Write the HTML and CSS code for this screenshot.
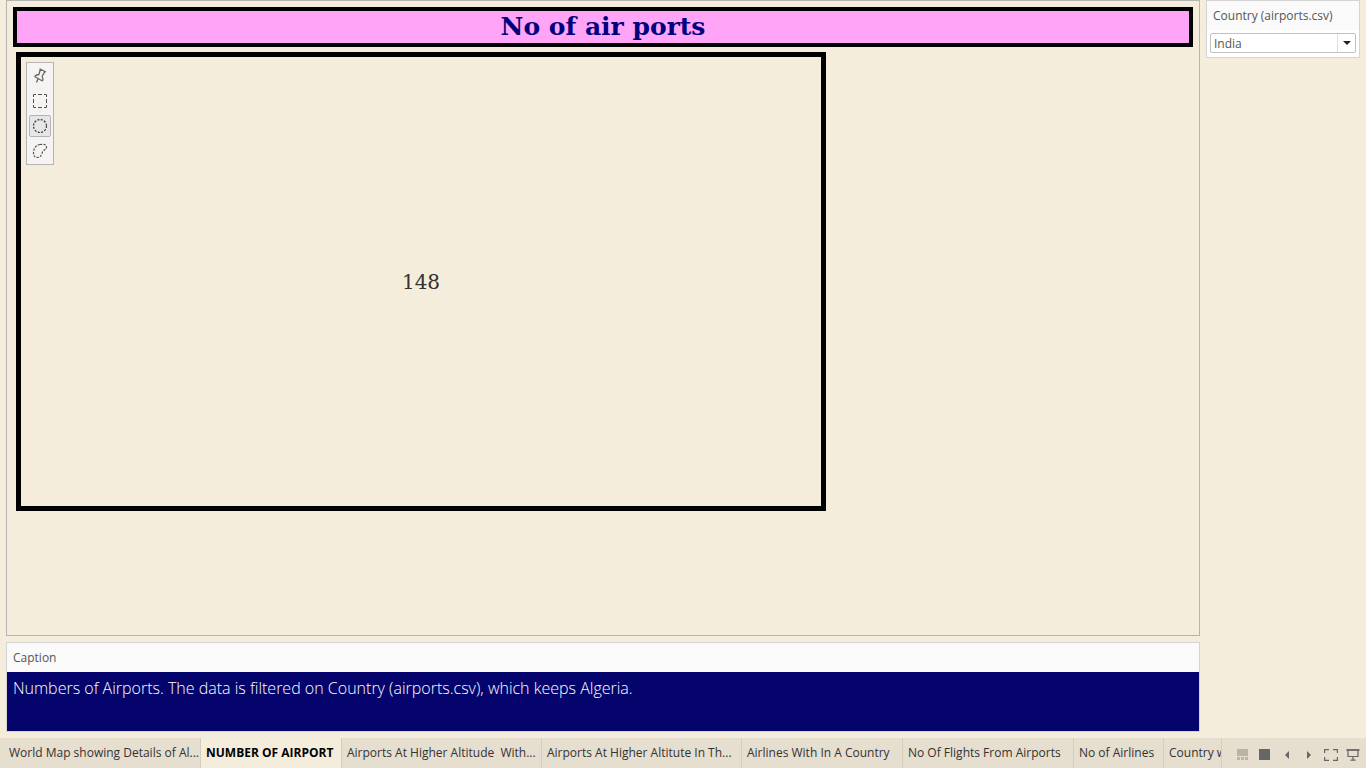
FILE: index.html
```html
<!DOCTYPE html>
<html lang="en">
<head>
<meta charset="utf-8">
<title>No of air ports</title>
<meta name="viewport" content="width=device-width, initial-scale=1">
<link rel="stylesheet" href="styles.css">
</head>
<body>
<div class="app">
  <div class="workspace">
    <main class="main">
      <section class="sheet">
        <h1 class="sheet-title">No of air ports</h1>
        <div class="canvas">
          <div class="frame">
            <output class="mark">148</output>
            <div class="tools" role="toolbar" aria-label="Selection tools">
              <button class="tool" type="button" aria-label="Pin">
                <svg width="16" height="16" viewBox="0 0 16 16" fill="none" stroke="#666" stroke-width="1.300"><path d="M7.500 0.800L14 4M8.300 1.300L7 6.500M12.800 3.600L10 8.500M2.500 8.500C4 7 5.500 6.500 7 6.500M10 8.500C11 10 11.200 11.500 10.500 13M2.500 8.500L10.500 13M6 10.700L4.500 14.500"/></svg>
              </button>
              <button class="tool" type="button" aria-label="Rectangular selection">
                <svg width="16" height="16" viewBox="0 0 16 16" fill="none" stroke="#555"><path d="M1.500 4V1.500H4M6 1.500H10M12 1.500H14.500V4M14.500 6V10M14.500 12V14.500H12M10 14.500H6M4 14.500H1.500V12M1.500 10V6"/></svg>
              </button>
              <button class="tool tool-active" type="button" aria-label="Radial selection" aria-pressed="true">
                <svg width="16" height="16" viewBox="0 0 16 16" fill="none" stroke="#333" stroke-width="1.200" stroke-dasharray="2 1.400"><circle cx="8" cy="8" r="6.500"/></svg>
              </button>
              <button class="tool" type="button" aria-label="Lasso selection">
                <svg width="16" height="16" viewBox="0 0 16 16" fill="none" stroke="#555" stroke-width="1.200" stroke-dasharray="2.200 1.300"><path d="M8 1.500C11 1.200 14.500 1.200 14.500 4C14.500 7 11.500 6.500 10.500 9C9.500 12 8.500 14.500 5.500 14.500C2.500 14.500 1.500 12.500 1.500 9.500C1.500 5.500 4 2 8 1.500Z"/></svg>
              </button>
            </div>
          </div>
        </div>
      </section>
      <section class="caption">
        <h2 class="caption-title">Caption</h2>
        <p class="caption-text">Numbers of Airports. The data is filtered on Country (airports.csv), which keeps Algeria.</p>
      </section>
    </main>
    <aside class="side">
      <div class="filter">
        <label class="filter-title" for="country">Country (airports.csv)</label>
        <div class="filter-field">
          <select class="filter-select" id="country"><option>India</option></select>
          <span class="filter-arrow"><svg width="8" height="4" viewBox="0 0 8 4"><path d="M0 0H8L4 4Z" fill="#222"/></svg></span>
        </div>
      </div>
    </aside>
  </div>
  <footer class="bar">
    <nav class="tabs" aria-label="Sheets">
      <a class="tab" href="#map">World Map showing Details of Al...</a>
      <a class="tab tab-current" href="#number" aria-current="page">NUMBER OF AIRPORT</a>
      <a class="tab" href="#altitude">Airports At Higher Altitude&nbsp; With...</a>
      <a class="tab" href="#altitute">Airports At Higher Altitute In Th...</a>
      <a class="tab" href="#country-airlines">Airlines With In A Country</a>
      <a class="tab" href="#flights">No Of Flights From Airports</a>
      <a class="tab" href="#airlines">No of Airlines</a>
      <a class="tab" href="#country-with">Country w</a>
    </nav>
    <div class="controls">
      <button class="control" type="button" aria-label="Show filmstrip"><svg width="12" height="12" viewBox="0 0 12 12" fill="#b9b3a8"><path d="M0 0H11V7H0ZM0 8H3V11H0ZM4 8H7V11H4ZM8 8H11V11H8Z"/></svg></button>
      <button class="control" type="button" aria-label="Show tabs"><svg width="12" height="12" viewBox="0 0 12 12" fill="#666"><path d="M0 0H11V11H0Z"/></svg></button>
      <button class="control" type="button" aria-label="Previous"><svg width="12" height="12" viewBox="0 0 12 12" fill="#666"><path d="M8 2V10L4 6Z"/></svg></button>
      <button class="control" type="button" aria-label="Next"><svg width="12" height="12" viewBox="0 0 12 12" fill="#666"><path d="M4 2V10L8 6Z"/></svg></button>
      <button class="control" type="button" aria-label="Full screen"><svg width="14" height="12" viewBox="0 0 14 12" fill="none" stroke="#666" stroke-width="1.200"><path d="M0.600 4V0.600H5M9 0.600H13.400V4M13.400 8V11.400H9M5 11.400H0.600V8"/></svg></button>
      <button class="control" type="button" aria-label="Presentation mode"><svg width="14" height="12" viewBox="0 0 14 12" fill="none" stroke="#666" stroke-width="1.200"><path d="M0.500 1H13.500" stroke-width="1.800"/><path d="M2 1V7.500H12V1M7 7.500V11M4.500 11.200H9.500"/></svg></button>
    </div>
  </footer>
</div>
</body>
</html>
```
FILE: styles.css
```css
* {
  box-sizing: border-box;
}

body {
  margin: 0;
  background: #f5eddc;
  color: #333;
  font-family: "Open Sans", "Noto Sans", sans-serif;
  font-size: 12px;
}

button {
  padding: 0;
  border: 0;
  background: none;
}

.app {
  display: flex;
  flex-direction: column;
  min-height: 100vh;
}

.workspace {
  flex: 1;
  display: flex;
  gap: 6px;
  padding: 0 6px;
}

.main {
  flex: 1;
  min-width: 0;
  display: flex;
  flex-direction: column;
  gap: 6px;
  padding-bottom: 6px;
}

.sheet {
  flex: 1;
  display: flex;
  flex-direction: column;
  gap: 5px;
  padding: 6px 6px 0;
  border: 1px solid #b4b4b4;
}

.sheet-title {
  margin: 0;
  border: 4px solid #000;
  background: #ffa4f6;
  color: #00007f;
  font: bold 25px/32px "DejaVu Serif", serif;
  text-align: center;
}

.canvas {
  flex: 1;
  display: grid;
  grid-template-columns: 810fr 367fr;
  grid-template-rows: 459fr 124fr;
  padding-left: 3px;
}

.frame {
  position: relative;
  display: flex;
  align-items: center;
  justify-content: center;
  border: 5px solid #000;
}

.mark {
  font: 20px/28px "DejaVu Serif", serif;
}

.tools {
  position: absolute;
  top: 5px;
  left: 5px;
  display: flex;
  flex-direction: column;
  gap: 3px;
  padding: 2px;
  border: 1px solid #b4b4b4;
  background: #f5f4f2;
}

.tool {
  display: flex;
  align-items: center;
  justify-content: center;
  width: 22px;
  height: 22px;
  border: 1px solid transparent;
  border-radius: 2px;
}

.tool-active {
  border-color: #b4b4b4;
  background: #e6e6e6;
}

.tool svg {
  flex: none;
}

.caption {
  border: 1px solid #d4d4d4;
  background: #04046c;
}

.caption-title {
  margin: 0;
  padding: 0 6px;
  background: #fafafa;
  color: #555;
  font-size: 12px;
  font-weight: 400;
  line-height: 29px;
}

.caption-text {
  margin: 0;
  min-height: 59px;
  padding: 6px;
  color: #fff;
  font-size: 16px;
  font-weight: 300;
  line-height: 20px;
}

.side {
  width: 154px;
}

.filter {
  border: 1px solid #d4d4d4;
  background: #fff;
}

.filter-title {
  display: block;
  padding: 0 6px;
  background: #fafafa;
  color: #555;
  line-height: 29px;
  white-space: nowrap;
}

.filter-field {
  position: relative;
  padding: 3px 3px 4px;
}

.filter-select {
  display: block;
  width: 100%;
  height: 20px;
  padding: 0 20px 0 3px;
  border: 1px solid #c2c2c2;
  border-radius: 2px;
  background: #fff;
  color: #555;
  font: inherit;
  appearance: none;
}

.filter-arrow {
  position: absolute;
  top: 4px;
  right: 4px;
  display: flex;
  align-items: center;
  justify-content: center;
  width: 18px;
  height: 18px;
  border-left: 1px solid #ddd;
  pointer-events: none;
}

.bar {
  display: flex;
  height: 30px;
  background: #e6decf;
}

.tabs {
  flex: 1;
  min-width: 0;
  display: grid;
  grid-template-columns: 197px 141px 200px 200px 161px 171px 90px 1fr;
  padding-left: 4px;
  overflow: hidden;
}

.tab {
  min-width: 0;
  padding: 0 5px;
  overflow: hidden;
  border-right: 1px solid #d5cdbe;
  color: #333;
  line-height: 30px;
  text-decoration: none;
  white-space: nowrap;
}

.tab:last-child {
  padding-right: 0;
}

.tab-current {
  background: #f5eddc;
  color: #000;
  font-weight: 700;
}

.controls {
  display: flex;
  align-items: center;
  padding: 4px 2px 0 10px;
}

.control {
  display: flex;
  align-items: center;
  justify-content: center;
  width: 22px;
  height: 22px;
}
```
